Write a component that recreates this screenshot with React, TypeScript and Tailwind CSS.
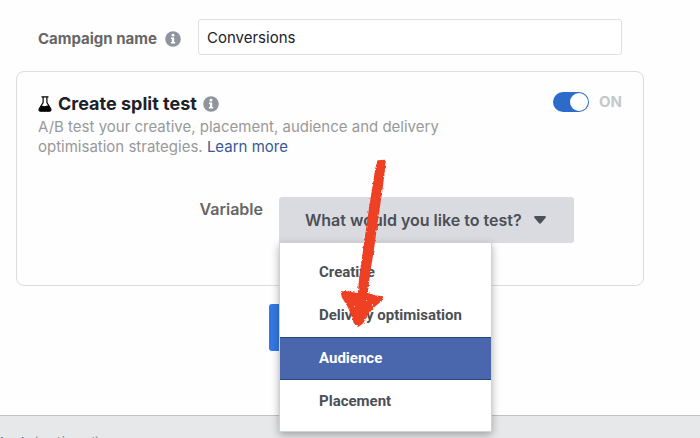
import { useState } from 'react'

const OPTIONS = ['Creative', 'Delivery optimisation', 'Audience', 'Placement']

function InfoIcon(){
  return (
    <svg viewBox="0 0 16 16" className="size-4 shrink-0" aria-hidden="true">
      <circle cx="8" cy="8" r="7.8" fill="#90949c" />
      <circle cx="8" cy="4.2" r="1.4" fill="#fff" />
      <path d="M6 6.6h3.2v4.400h1v1.400H5.900V11h1V8H6z" fill="#fff" />
    </svg>
  )
}

function FlaskIcon(){
  return (
    <svg viewBox="0 0 14 16" className="h-4 w-3.5 shrink-0" aria-hidden="true">
      <path d="M3.500 .8h7M5.100 1v5.600L1.400 12.500c-.8 1.500-.2 2.700 1.300 2.700h8.600c1.500 0 2.100-1.200 1.300-2.700L8.900 6.600V1" fill="none" stroke="#000" strokeWidth="1.200" />
      <path d="M3.400 9.800c1.500-.5 2.500.6 3.800.3 1.200-.3 2-.8 3.400-.5l2 3.300c.6 1.300.1 2.300-1.300 2.300H2.700c-1.400 0-1.900-1-1.300-2.300z" fill="#000" />
    </svg>
  )
}

// Hand-drawn crayon arrow, roughened at the edges
function Arrow(){
  return (
    <svg viewBox="0 0 50 172" className="pointer-events-none absolute -top-10 left-[60px] z-20 h-[172px] w-[50px]" aria-hidden="true">
      <filter id="crayon" x="-10%" y="-5%" width="120%" height="110%">
        <feTurbulence type="fractalNoise" baseFrequency="0.5" numOctaves="2" seed="4" result="noise" />
        <feDisplacementMap in="SourceGraphic" in2="noise" scale="3" xChannelSelector="R" yChannelSelector="G" />
      </filter>
      <g filter="url(#crayon)">
        <path d="M39 4l7-.5-.5 7-3 24-4.500 30-3.500 26-3.500 22-3 24 8 2.500 7.500 1-2 4-7 6-6 7-5 9-4 3-4-3-3-9-4-9-5-8-1-5 6 0 11 2 1.500-17 4-28 4-29 4.500-29 3.500-22z" fill="#ee3f24" stroke="#ee3f24" strokeWidth="1.500" strokeLinejoin="round" />
        <path d="M11 142l1 1M27 144l1-1M33 148l1-1M15 149l1 1" stroke="#fff" strokeWidth="1" opacity=".7" />
      </g>
    </svg>
  )
}

export default function App(){
  const [enabled, setEnabled] = useState(true)
  const [selected, setSelected] = useState('Audience')
  const [open, setOpen] = useState(true)
  return (
    <div className="flex h-screen flex-col overflow-hidden bg-[#fefefe] font-['Inter',sans-serif]">
      <main className="flex flex-col pt-[19px] pr-14 pb-16 pl-4">
        <div className="flex items-center px-[22px]">
          <label htmlFor="campaign" className="flex w-40 shrink-0 items-center gap-2 pt-1 text-[15px] font-bold whitespace-nowrap text-[#666]">
            Campaign name
            <InfoIcon />
          </label>
          <input
            id="campaign"
            defaultValue="Conversions"
            className="h-9 min-w-0 flex-1 rounded-[3px] border border-[#dddfe2] bg-white px-2 text-[15px] text-[#1d2129]"
          />
        </div>

        <section className="mt-4 rounded-lg border border-[#dddddf] px-[21px] pt-[19px] pb-[42px]">
          <div className="flex items-start justify-between">
            <div>
              <h2 className="flex h-[26px] items-center gap-1.5 text-lg font-bold text-[#1d2129]">
                <FlaskIcon />
                Create split test
                <InfoIcon />
              </h2>
              <p className="max-w-[430px] text-[15px] leading-5 text-[#999]">
                A/B test your creative, placement, audience and delivery optimisation strategies.{' '}
                <a href="#learn" className="text-[#365899]">Learn more</a>
              </p>
            </div>
            <label className="flex items-center gap-2.5 text-[15px] font-bold text-[#c5c8cd]">
              <input type="checkbox" role="switch" checked={enabled} onChange={() => setEnabled(!enabled)} className="peer sr-only" />
              <span className="flex h-5 w-9 justify-start rounded-full bg-[#bec3c9] p-px peer-checked:justify-end peer-checked:bg-[#2d6bca]">
                <span className="size-[18px] rounded-full bg-white" />
              </span>
              {enabled ? 'ON' : 'OFF'}
            </label>
          </div>

          <div className="mt-10 flex items-start">
            <span id="variable" className="w-[241px] shrink-0 pr-4 text-right text-base font-semibold text-[#666]">Variable</span>
            <div className="relative">
              <button
                type="button"
                aria-haspopup="listbox"
                aria-expanded={open}
                onClick={() => setOpen(!open)}
                className="flex h-[46px] w-[295px] items-center gap-3 rounded-[3px] bg-[#dadbe0] pl-[26px] text-base font-semibold whitespace-nowrap text-[#4b4f56]"
              >
                What would you like to test?
                <svg viewBox="0 0 12 8" className="h-2 w-3" aria-hidden="true">
                  <path d="M1 0h10q1.500 .6.6 1.800L7 7.300q-1 .9-2 0L.4 1.800Q-.5.6 1 0z" fill="#4b4f56" />
                </svg>
              </button>
              {open && (
                <ul role="listbox" aria-labelledby="variable" className="absolute top-[45px] left-0 z-10 w-[213px] border border-[#d0d1d4] bg-white py-2 font-['Roboto',sans-serif] text-[15px] font-bold shadow-[0_3px_8px_rgba(0,0,0,0.3)]">
                  {OPTIONS.map(o => (
                    <li key={o} role="option" aria-selected={o === selected}>
                      <button
                        type="button"
                        onClick={() => setSelected(o)}
                        className={o === selected
                          ? 'block h-[43px] w-full border-y border-[#29487d] bg-[#4a66ad] pl-[39px] text-left text-white'
                          : 'block h-[43px] w-full border-y border-transparent pl-[39px] text-left text-[#4b4f56]'}
                      >
                        {o}
                      </button>
                    </li>
                  ))}
                </ul>
              )}
              <Arrow />
            </div>
          </div>
        </section>

        <button type="button" className="mt-[18px] ml-[253px] h-[47px] w-32 rounded-[3px] bg-[#3578e5]" aria-label="Continue" />
      </main>

      <footer className="flex-1 border-t border-[#bfc1c4] bg-[#e7e8ea] pt-4 text-[15px] whitespace-nowrap text-[#90949c]">
        <a href="#feedback" className="text-[#365899]">lack</a> (optional)
      </footer>
    </div>
  )
}
